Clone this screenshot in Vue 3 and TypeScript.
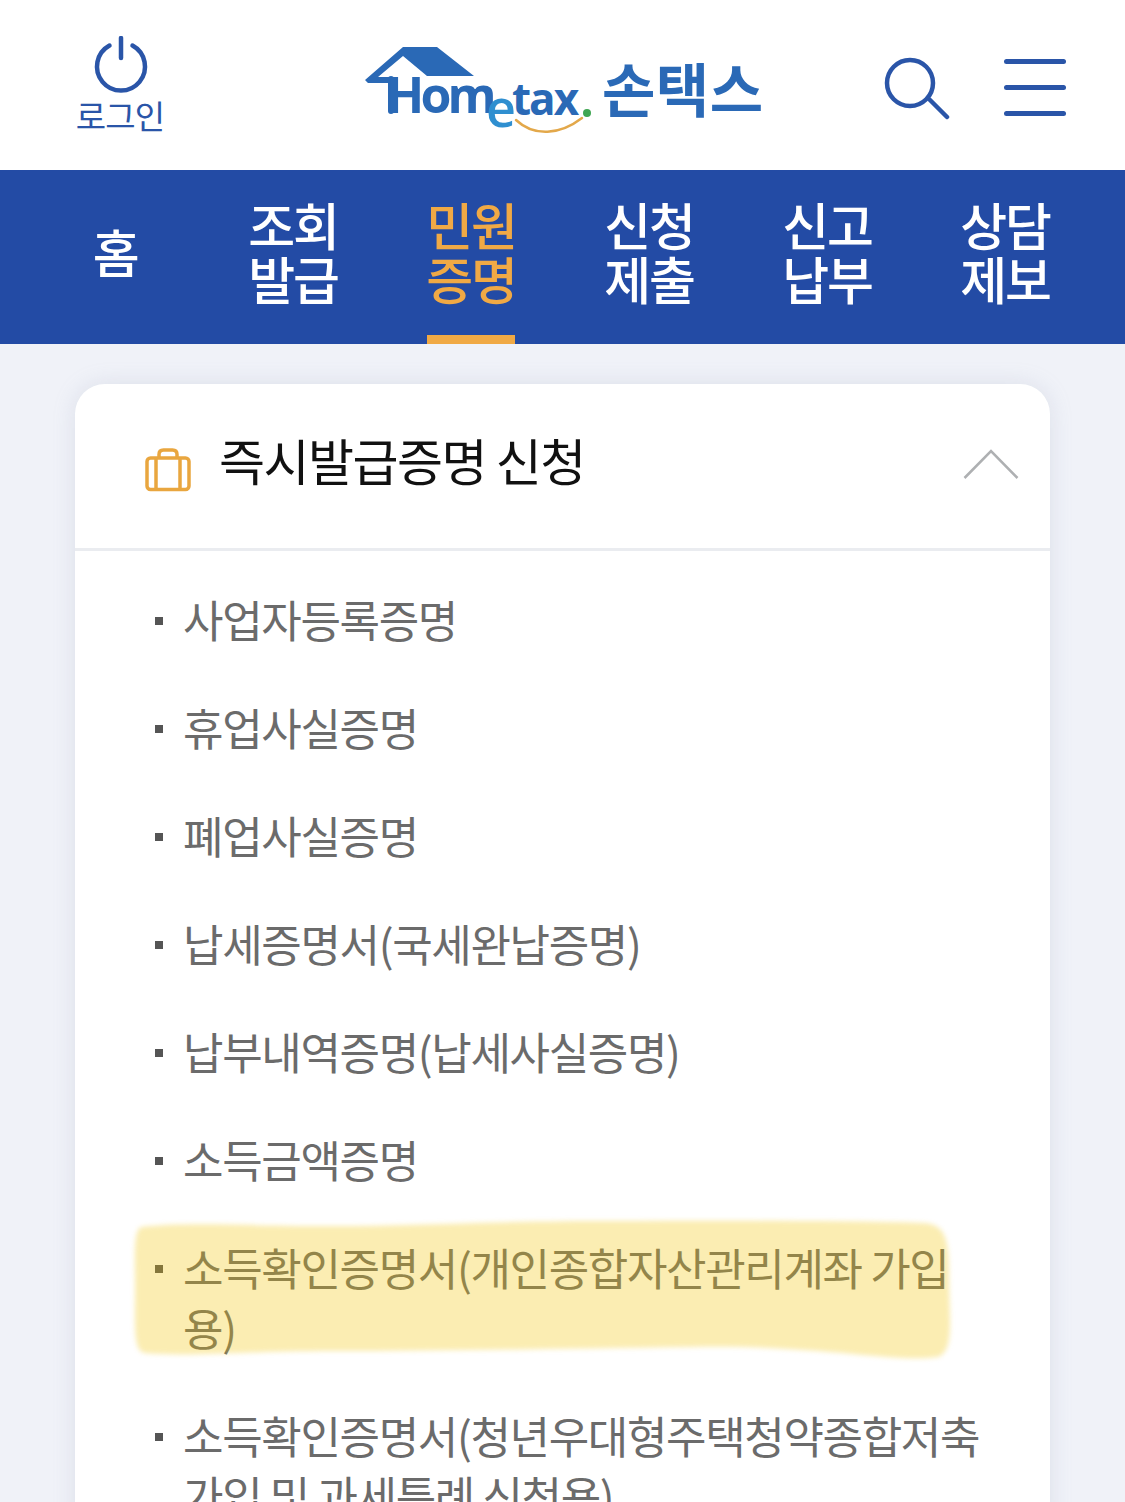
<script setup lang="ts">
interface NavItem {
  lines: string[]
  active?: boolean
}

interface CertItem {
  label: string
  marked?: boolean
}

const navItems: NavItem[] = [
  { lines: ['홈'] },
  { lines: ['조회', '발급'] },
  { lines: ['민원', '증명'], active: true },
  { lines: ['신청', '제출'] },
  { lines: ['신고', '납부'] },
  { lines: ['상담', '제보'] }
]

const certItems: CertItem[] = [
  { label: '사업자등록증명' },
  { label: '휴업사실증명' },
  { label: '폐업사실증명' },
  { label: '납세증명서(국세완납증명)' },
  { label: '납부내역증명(납세사실증명)' },
  { label: '소득금액증명' },
  { label: '소득확인증명서(개인종합자산관리계좌 가입용)', marked: true },
  { label: '소득확인증명서(청년우대형주택청약종합저축 가입 및 과세특례 신청용)' }
]
</script>

<template>
  <div class="page">
    <header class="top">
      <div class="login">
        <svg class="login-icon" width="60" height="60" viewBox="0 0 60 60" fill="none">
          <path d="M18.5 9.5A24 24 0 1 0 41.5 9.5" stroke="#2a55a8" stroke-width="4.5" stroke-linecap="round" />
          <path d="M30 2V22" stroke="#2a55a8" stroke-width="4.5" stroke-linecap="round" />
        </svg>
        <span class="login-text">로그인</span>
      </div>

      <div class="logo">
        <svg class="logo-art" width="400" height="100" viewBox="0 0 400 100" fill="none">
          <path d="M1 37L39 4H73L110 33H63L39 13L14 34H25V40H4Z" fill="#2a69b6" />
          <path d="M27 36V68" stroke="#2a69b6" stroke-width="6" stroke-linecap="round" />
          <path d="M152 77C170 94 196 92 218 75" stroke="#e3a84a" stroke-width="2.5" stroke-linecap="round" />
          <circle cx="223" cy="70" r="4" fill="#3fa652" />
        </svg>
        <span class="logo-word">Hom</span>
        <span class="logo-e">e</span>
        <span class="logo-tax">tax</span>
        <span class="logo-kr">손택스</span>
      </div>

      <svg class="search" width="66" height="66" viewBox="0 0 66 66" fill="none">
        <circle cx="26" cy="26" r="23" stroke="#2a55a8" stroke-width="4.5" />
        <path d="M46 43L63 60" stroke="#2a55a8" stroke-width="4.5" stroke-linecap="round" />
      </svg>

      <div class="menu">
        <span></span>
        <span></span>
        <span></span>
      </div>
    </header>

    <nav class="nav">
      <a v-for="item in navItems" :key="item.lines[0]" class="nav-item" :class="{ 'nav-item--active': item.active }">
        <span class="nav-label">
          <span v-for="line in item.lines" :key="line">{{ line }}</span>
          <i v-if="item.active" class="nav-bar"></i>
        </span>
      </a>
    </nav>

    <main class="content">
      <section class="card">
        <div class="card-head">
          <svg class="case" width="46" height="44" viewBox="0 0 46 44" fill="none">
            <rect x="2" y="10" width="42" height="31.5" rx="3.5" stroke="#e9a63f" stroke-width="3.5" />
            <path d="M11 10V41M35 10V41" stroke="#e9a63f" stroke-width="3.5" />
            <path d="M14 10V6.5C14 3.5 15.5 2 18.5 2H27.5C30.5 2 32 3.5 32 6.5V10" stroke="#e9a63f" stroke-width="3.5" />
          </svg>
          <h2 class="card-title">즉시발급증명 신청</h2>
          <svg class="chevron" width="56" height="30" viewBox="0 0 56 30" fill="none">
            <path d="M1.5 29L28 2L54.5 29" stroke="#aeb0b2" stroke-width="2.5" />
          </svg>
        </div>

        <ul class="cert-list">
          <li v-for="item in certItems" :key="item.label" class="cert-item">
            <i class="cert-dot"></i>
            <span class="cert-label">{{ item.label }}</span>
            <svg v-if="item.marked" class="marker" width="820" height="146" viewBox="0 0 820 146" preserveAspectRatio="none">
              <path
                d="M8 10C60 4 130 10 220 9C300 8 370 4 470 4C580 4 700 3 790 6C812 7 816 20 816 60C816 100 822 134 805 140C760 146 690 128 560 130C420 132 300 134 200 134C120 134 50 140 12 136C0 134 2 110 2 70C2 40 0 14 8 10Z"
                fill="#f1c500"
                fill-opacity="0.3"
              />
            </svg>
          </li>
        </ul>
      </section>
    </main>
  </div>
</template>

<style scoped>
.page {
  width: 1125px;
  height: 1502px;
  overflow: hidden;
  background: #f0f2f8;
  font-family: "Noto Sans CJK KR", "Noto Sans", sans-serif;
}

.top {
  display: flex;
  align-items: center;
  height: 170px;
  padding-left: 76px;
  background: #fff;
}

.login {
  display: flex;
  flex-direction: column;
  align-items: center;
  width: 88px;
}

.login-icon {
  display: block;
  margin-left: 1px;
}

.login-text {
  margin-top: -1px;
  font-size: 33px;
  line-height: 40px;
  letter-spacing: -0.8px;
  font-weight: 400;
  color: #2a55a8;
  white-space: nowrap;
}

.logo {
  position: relative;
  width: 400px;
  height: 100px;
  margin-left: 200px;
  margin-top: 16px;
  color: #2a69b6;
}

.logo-art {
  position: absolute;
  left: 0;
  top: 0;
}

.logo-word,
.logo-e,
.logo-tax,
.logo-kr {
  position: absolute;
  line-height: 1;
  font-weight: 700;
  white-space: nowrap;
}

.logo-word,
.logo-tax {
  font-family: "Open Sans", sans-serif;
}

.logo-word {
  left: 22px;
  top: 26px;
  font-size: 50px;
  letter-spacing: -3.8px;
}

.logo-e {
  left: 122px;
  top: 38px;
  font-family: "Open Sans", sans-serif;
  font-size: 52px;
  font-weight: 600;
  color: #2f8fd0;
}

.logo-tax {
  left: 148px;
  top: 33px;
  font-size: 44px;
  letter-spacing: -2px;
}

.logo-kr {
  left: 238px;
  top: 15px;
  font-size: 58px;
  letter-spacing: 0.5px;
}

.search {
  margin-left: 120px;
  margin-top: 9px;
}

.menu {
  display: flex;
  flex-direction: column;
  gap: 21px;
  width: 62px;
  margin-left: 54px;
  margin-top: 4px;
}

.menu span {
  display: block;
  height: 5px;
  border-radius: 2.5px;
  background: #2a55a8;
}

.nav {
  display: grid;
  grid-template-columns: repeat(6, 178px);
  height: 174px;
  padding-left: 26px;
  background: #234ba5;
}

.nav-item {
  display: flex;
  justify-content: center;
  align-items: center;
  color: #fff;
}

.nav-item--active {
  color: #f0a945;
}

.nav-label {
  display: flex;
  flex-direction: column;
  align-items: center;
  position: relative;
  box-sizing: border-box;
  height: 174px;
  padding-bottom: 13px;
  justify-content: center;
  font-size: 51px;
  line-height: 54px;
  letter-spacing: -2.2px;
  font-weight: 500;
}

.nav-bar {
  position: absolute;
  left: 1px;
  right: 1px;
  bottom: 0;
  height: 9px;
  background: #f0a945;
}

.content {
  padding: 40px 75px 0;
}

.card {
  border-radius: 30px 30px 0 0;
  background: #fff;
  box-shadow: 0 0 22px rgba(150, 158, 185, 0.22);
}

.card-head {
  display: flex;
  align-items: center;
  height: 164px;
  padding: 0 31px 0 70px;
  border-bottom: 3px solid #eaecf0;
}

.case {
  margin-top: 7px;
  flex: none;
}

.card-title {
  flex: 1;
  margin: -14px 0 0 28px;
  font-size: 50px;
  line-height: 60px;
  letter-spacing: -1.5px;
  font-weight: 400;
  color: #111;
}

.chevron {
  margin-top: -5px;
}

.cert-list {
  margin: 0;
  padding: 38px 67px 0 80px;
  list-style: none;
}

.cert-item {
  position: relative;
  display: flex;
  margin-bottom: 48px;
}

.cert-dot {
  flex: none;
  width: 8px;
  height: 8px;
  margin-top: 28px;
  margin-right: 20px;
  background: #555;
}

.cert-label {
  flex: 1;
  font-size: 44px;
  line-height: 60px;
  letter-spacing: -1.35px;
  font-weight: 400;
  color: #6b6b6b;
}

.marker {
  position: absolute;
  left: -22px;
  top: -20px;
  filter: blur(2.5px);
  pointer-events: none;
}
</style>

<style>
html,
body {
  margin: 0;
  background: #f0f2f8;
}
</style>
